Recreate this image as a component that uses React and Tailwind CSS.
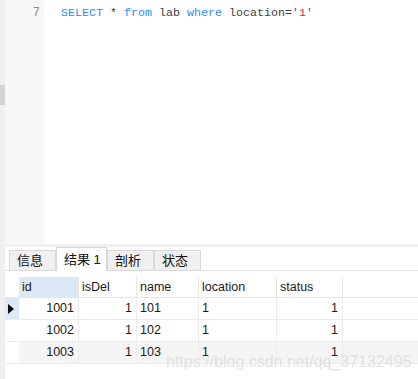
const rows = [
  { id: "1001", isDel: "1", name: "101", location: "1", status: "1" },
  { id: "1002", isDel: "1", name: "102", location: "1", status: "1" },
  { id: "1003", isDel: "1", name: "103", location: "1", status: "1" },
];

const ui = { fontFamily: '"Liberation Sans", "Noto Sans CJK SC", sans-serif' };
const mono = { fontFamily: '"Liberation Mono", "DejaVu Sans Mono", monospace' };

function Tab({ label, active }) {
  return active ? (
    <div className="h-[24px] w-[51px] -mb-px bg-white border border-b-0 border-[#d9d9d9] pl-[7px] pt-[2px] text-[13px] text-[#111]">
      {label}
    </div>
  ) : (
    <div className="h-[21px] w-[47px] -mb-px bg-[#f0f0f0] border border-[#d9d9d9] pl-[7px] text-[13px] leading-[20px] text-[#111]">
      {label}
    </div>
  );
}

export default function App() {
  return (
    <div className="w-[418px] h-[379px] flex bg-white overflow-hidden relative" style={ui}>
      {/* left strip with scroll marker */}
      <div className="w-[5px] flex flex-col bg-[#f0f0f0]">
        <div className="h-[85px]" />
        <div className="h-[20px] bg-[#d4d4d4]" />
      </div>

      <div className="flex-1 flex flex-col">
        {/* editor */}
        <div className="h-[244px] flex">
          <div className="w-[39px] bg-[#f7f7f7] relative text-[12px] text-[#8a8a8a]" style={mono}>
            <div className="absolute right-[4px] top-[-13px] leading-[17px]">6</div>
            <div className="absolute right-[4px] top-[5px] leading-[17px]">7</div>
          </div>
          <div className="flex-1 pl-[17px] pt-[5px] text-[11.67px] leading-[17px] text-[#404040] whitespace-pre" style={mono}>
            <span className="text-[#2b8cf2]">SELECT</span> * <span className="text-[#2b8cf2]">from</span> lab{" "}
            <span className="text-[#2b8cf2]">where</span> location=<span className="text-[#e8193c]">'1'</span>
          </div>
        </div>

        {/* splitter */}
        <div className="h-[3px] bg-[#f0f0f0]" />

        {/* tabs */}
        <div className="h-[24px] flex items-end pl-[4px] border-b border-[#e3e3e3]">
          <Tab label="信息" />
          <Tab label="结果 1" active />
          <Tab label="剖析" />
          <Tab label="状态" />
        </div>

        {/* result grid */}
        <div className="mt-[6px] text-[12.5px] text-[#1a1a1a]">
          <div className="flex h-[21px] border-b border-[#e6e6e6]">
            <div className="w-[14px]" />
            <div className="w-[60px] bg-[#dbe8f6] border-r border-[#e6e6e6] pl-[3px] leading-[21px]">id</div>
            <div className="w-[58px] border-r border-[#e6e6e6] pl-[3px] leading-[21px]">isDel</div>
            <div className="w-[62px] border-r border-[#e6e6e6] pl-[3px] leading-[21px]">name</div>
            <div className="w-[78px] border-r border-[#e6e6e6] pl-[3px] leading-[21px]">location</div>
            <div className="w-[66px] border-r border-[#e6e6e6] pl-[3px] leading-[21px]">status</div>
          </div>
          {rows.map((r, i) => (
            <div
              key={r.id}
              className={`flex h-[22px] border-b border-[#ececec] leading-[21px] ${i === 2 ? "bg-[#f5f5f5]" : ""}`}
            >
              <div className={`w-[14px] flex items-center pl-[3px] ${i === 0 ? "bg-[#dbe8f6]" : "bg-white"}`}>
                {i === 0 && (
                  <svg width="6" height="10" viewBox="0 0 6 10">
                    <path d="M0 0 L6 5 L0 10 Z" fill="#000" />
                  </svg>
                )}
              </div>
              <div className="w-[60px] border-r border-[#ececec] text-right pr-[4px]">{r.id}</div>
              <div className="w-[58px] border-r border-[#ececec] text-right pr-[4px]">{r.isDel}</div>
              <div className="w-[62px] border-r border-[#ececec] pl-[3px]">{r.name}</div>
              <div className="w-[78px] border-r border-[#ececec] pl-[3px]">{r.location}</div>
              <div className="w-[66px] border-r border-[#ececec] text-right pr-[4px]">{r.status}</div>
            </div>
          ))}
        </div>
      </div>

      {/* watermark */}
      <div
        className="absolute left-[166px] top-[350px] text-[16px] text-[#dcdcdc] opacity-80 pointer-events-none"
        style={{ fontFamily: '"Liberation Sans", Arial, sans-serif' }}
      >
        https://blog.csdn.net/qq_37132495
      </div>
    </div>
  );
}
